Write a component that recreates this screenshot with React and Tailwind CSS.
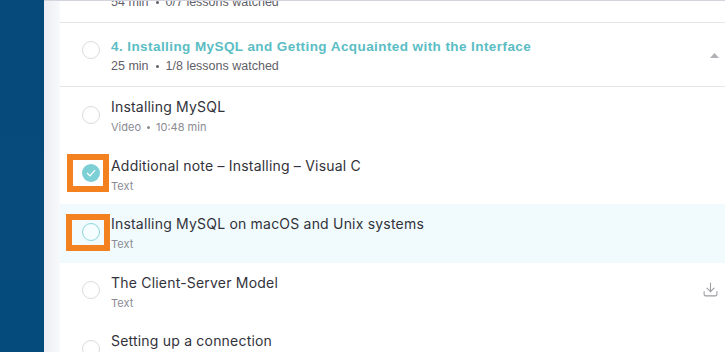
import { Download } from "lucide-react";

const lessons = [
  { title: "Installing MySQL", meta: ["Video", "10:48 min"] },
  { title: "Additional note – Installing – Visual C", meta: ["Text"], done: true, mark: "a" },
  { title: "Installing MySQL on macOS and Unix systems", meta: ["Text"], active: true, mark: "b" },
  { title: "The Client-Server Model", meta: ["Text"], download: true },
  { title: "Setting up a connection", meta: ["Text"] },
];

function Circle({ done, active }) {
  if (done) {
    return (
      <div className="w-[18px] h-[18px] rounded-full bg-[#7dcfd6] flex items-center justify-center mb-[3px] shrink-0">
        <svg width="10" height="8" viewBox="0 0 10 8" fill="none">
          <polyline points="1,4 4,6.8 9,1.2" stroke="white" strokeWidth="1.2" />
        </svg>
      </div>
    );
  }
  return (
    <div
      className={`w-[18px] h-[18px] rounded-full border mb-[3px] shrink-0 ${
        active ? "border-[#8ad6dc] bg-[#f6fdfe]" : "border-[#dcdcdf] bg-white"
      }`}
    />
  );
}

function SectionHeader({ title, meta, open }) {
  return (
    <div className="flex items-start pl-[22px] pr-[6px] pt-[16px] pb-[12px] border-b border-[#e6e6ea] font-['Liberation_Sans',Arial,sans-serif]">
      <div className="w-[18px] h-[18px] rounded-full border border-[#dcdcdf] mt-[2px] shrink-0" />
      <div className="ml-[11px] flex-1">
        <div className="text-[13.5px] leading-[16px] font-bold tracking-[0.42px] text-[#5bbdc4]">{title}</div>
        <div className="mt-[3px] text-[12.5px] leading-[16px] text-[#5f5f69] flex items-center">
          <span>{meta[0]}</span>
          <span className="w-[3px] h-[3px] rounded-full bg-[#5f5f69] mx-[7px]" />
          <span>{meta[1]}</span>
        </div>
      </div>
      {open && (
        <svg width="9" height="5" viewBox="0 0 9 5" className="mt-[14px]">
          <polygon points="0,5 4.5,0 9,5" fill="#b0b0b5" />
        </svg>
      )}
    </div>
  );
}

function LessonRow({ lesson }) {
  return (
    <div
      className={`relative h-[58.5px] flex items-center pl-[22px] pr-[6px] ${
        lesson.active ? "bg-[#f1fbfd]" : ""
      }`}
    >
      <Circle done={lesson.done} active={lesson.active} />
      <div className="ml-[11px] flex-1 font-['Inter',sans-serif]">
        <div className="text-[14px] leading-[20px] tracking-[0.2px] text-[#32323a]">{lesson.title}</div>
        <div className="mt-[2px] text-[11px] leading-[16px] text-[#8b8b95] flex items-center">
          <span>{lesson.meta[0]}</span>
          {lesson.meta[1] && (
            <>
              <span className="w-[3px] h-[3px] rounded-full bg-[#8b8b95] mx-[6px]" />
              <span>{lesson.meta[1]}</span>
            </>
          )}
        </div>
      </div>
      {lesson.download && <Download size={17} strokeWidth={1.5} className="text-[#9b9ba0] mb-[5px]" />}
      {lesson.mark === "a" && (
        <div className="absolute left-[7px] top-[8px] w-[42px] h-[38px] border-[6px] border-[#f4811f]" />
      )}
      {lesson.mark === "b" && (
        <div className="absolute left-[6px] top-[10px] w-[44px] h-[37px] border-[6px] border-[#f4811f]" />
      )}
    </div>
  );
}

export default function App() {
  return (
    <div className="flex w-[725px] h-[352px] overflow-hidden bg-white">
      <div className="w-[44px] shrink-0 bg-gradient-to-b from-[#064a7b] to-[#054b7c]" />
      <div className="w-[16px] shrink-0 border-t border-[#d4d4de] bg-gradient-to-r from-[#eceef3] to-[#f8f9fb]" />
      <div className="flex-1 border-t border-[#d4d4de] overflow-hidden">
        <div className="-mt-[42px]">
          <SectionHeader title="3. Previous section" meta={["54 min", "0/7 lessons watched"]} />
          <SectionHeader
            title="4. Installing MySQL and Getting Acquainted with the Interface"
            meta={["25 min", "1/8 lessons watched"]}
            open
          />
          {lessons.map((l) => (
            <LessonRow key={l.title} lesson={l} />
          ))}
        </div>
      </div>
    </div>
  );
}
